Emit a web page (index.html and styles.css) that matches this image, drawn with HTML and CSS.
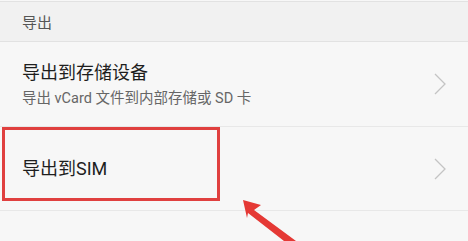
FILE: index.html
```html
<!DOCTYPE html>
<html lang="zh-CN">
<head>
<meta charset="utf-8">
<link rel="stylesheet" href="styles.css">
</head>
<body>
<div class="screen">
  <div class="section-header">导出</div>
  <div class="item">
    <div class="item-text">
      <div class="item-title">导出到存储设备</div>
      <div class="item-sub">导出 vCard 文件到内部存储或 SD 卡</div>
    </div>
    <svg class="chevron" width="12" height="22" viewBox="0 0 12 22"><path d="M1 1 L11 11 L1 21" fill="none" stroke="#c4c4c4" stroke-width="1.3"/></svg>
  </div>
  <div class="item item-sim">
    <div class="item-text">
      <div class="item-title">导出到SIM</div>
    </div>
    <svg class="chevron" width="12" height="22" viewBox="0 0 12 22"><path d="M1 1 L11 11 L1 21" fill="none" stroke="#c4c4c4" stroke-width="1.3"/></svg>
  </div>
  <div class="highlight"></div>
  <svg class="arrow" width="468" height="241" viewBox="0 0 468 241">
    <polygon points="243,200 261,205 254,210 296,241 284,241 248,213 247,218" fill="#e53935"/>
  </svg>
</div>
</body>
</html>
```
FILE: styles.css
```css
html, body {
  margin: 0;
  padding: 0;
}
body {
  background: #f7f7f7;
  font-family: Roboto, "Noto Sans CJK SC", sans-serif;
  width: 468px;
  height: 241px;
  overflow: hidden;
}
.screen {
  position: relative;
  width: 468px;
  height: 241px;
  padding-top: 1px;
  box-sizing: border-box;
}
.section-header {
  height: 39px;
  border-top: 1px solid #e2e2e2;
  border-bottom: 1px solid #e2e2e2;
  background: #f1f1f1;
  color: #555;
  font-size: 15px;
  padding-left: 22px;
  display: flex;
  align-items: center;
}
.item {
  height: 84px;
  border-bottom: 1px solid #e8e8e8;
  display: flex;
  align-items: center;
  padding-left: 22px;
  padding-right: 22px;
}
.item-sim {
  height: 83px;
}
.item-text {
  flex: 1;
  display: flex;
  flex-direction: column;
}
.item-title {
  font-size: 18px;
  color: #1e1e1e;
  line-height: 24px;
}
.item-sub {
  font-size: 14.5px;
  color: #666;
  line-height: 18px;
  margin-top: 5px;
}
.chevron {
  flex: none;
}
.highlight {
  position: absolute;
  left: 2px;
  top: 127px;
  width: 212px;
  height: 68px;
  border: 3px solid #e0403f;
}
.arrow {
  position: absolute;
  left: 0;
  top: 0;
}
```
